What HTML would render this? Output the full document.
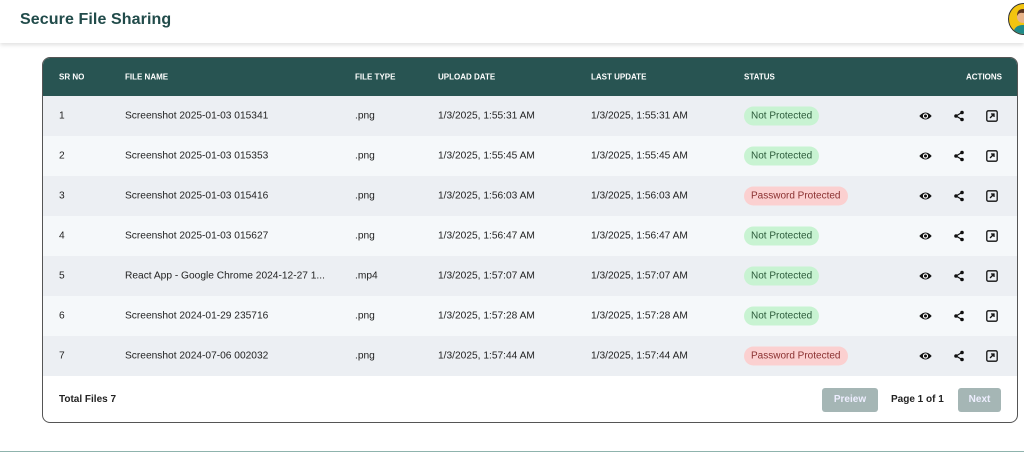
<!DOCTYPE html>
<html><head><style>
*{box-sizing:border-box;margin:0;padding:0}
body{width:1024px;height:456px;background:#fff;font-family:"Liberation Sans",Arial,sans-serif;position:relative;overflow:hidden;color:#222}
.hdr{height:43px;background:#fff;box-shadow:0 2px 4px rgba(0,0,0,.12);position:relative}
.hdr h1{position:absolute;left:20px;top:11px;font-size:16px;font-weight:bold;color:#214b4a;letter-spacing:.1px}
.av{position:absolute;left:1008px;top:3px;width:32px;height:32px;border-radius:50%;background:#f2c40f;border:1.5px solid #333;overflow:hidden}
.tbl{position:absolute;left:42px;top:57px;width:976px;height:366px;border:1px solid #555;border-radius:8px;overflow:hidden;background:#fff}
.th{height:38px;background:#285452;color:#fff;font-size:8px;font-weight:bold;position:relative}
.th span,.row span{position:absolute;top:50%;transform:translateY(-50%);white-space:nowrap}
.row{height:40px;position:relative;font-size:10.2px;color:#222}
.row:nth-child(odd){background:#eceff3}
.row:nth-child(even){background:#f5f8fa}
.b{padding:4px 7px;border-radius:10px;font-size:10px}
.g{background:#c8f3d2;color:#2b5a3a}
.r{background:#fbd0d0;color:#8a3030}
.ft{position:absolute;left:0;top:318px;width:100%;height:47px}
.btn{position:absolute;top:12px;height:24px;background:#a5b6b5;color:#eef;font-size:10px;font-weight:bold;border-radius:3px;text-align:center;line-height:24px}
</style></head><body>
<div class="hdr"><h1>Secure File Sharing</h1>
<div class="av"><svg width="32" height="32"><path d="M4 32 Q4 21 14 21 Q24 21 24 32Z" fill="#1f8a8a"/><circle cx="14" cy="13" r="6" fill="#e8b48a"/><path d="M8 12 Q8 5 14 5 Q20 5 20 12 Q18 8 14 9 Q10 8 8 12Z" fill="#5a3320"/></svg></div></div>
<div class="tbl">
<div class="th"><span style="left:16px">SR NO</span><span style="left:82px">FILE NAME</span><span style="left:312px">FILE TYPE</span><span style="left:395px">UPLOAD DATE</span><span style="left:548px">LAST UPDATE</span><span style="left:701px">STATUS</span><span style="right:15px">ACTIONS</span></div>
<div id="rows"></div>
<div class="ft"><span style="position:absolute;left:16px;top:18px;font-size:10px;font-weight:bold">Total Files 7</span>
<div class="btn" style="left:779px;width:56px">Preiew</div>
<span style="position:absolute;left:848px;top:18px;font-size:10px;font-weight:bold">Page 1 of 1</span>
<div class="btn" style="left:915px;width:43px">Next</div></div>
</div>
<div style="position:absolute;left:0;top:451px;width:1024px;height:1px;background:#8fb3ad"></div>
<script>
var d=[["1","Screenshot 2025-01-03 015341",".png","1:55:31",0],["2","Screenshot 2025-01-03 015353",".png","1:55:45",0],["3","Screenshot 2025-01-03 015416",".png","1:56:03",1],["4","Screenshot 2025-01-03 015627",".png","1:56:47",0],["5","React App - Google Chrome 2024-12-27 1...",".mp4","1:57:07",0],["6","Screenshot 2024-01-29 235716",".png","1:57:28",0],["7","Screenshot 2024-07-06 002032",".png","1:57:44",1]];
var ic='<svg style="position:absolute;left:876px;top:14px" width="13" height="12" viewBox="0 0 13 12"><path d="M0.3 6 Q6.5 -1 12.7 6 Q6.5 13 0.3 6Z" fill="#111"/><circle cx="6.5" cy="6" r="2.6" fill="#fff"/><circle cx="6.5" cy="6" r="1.5" fill="#111"/></svg>'+
'<svg style="position:absolute;left:910px;top:14px" width="12" height="12" viewBox="0 0 12 12"><circle cx="9" cy="2.5" r="1.8" fill="#111"/><circle cx="9" cy="9.5" r="1.8" fill="#111"/><circle cx="3" cy="6" r="1.8" fill="#111"/><path d="M9 2.5L3 6L9 9.5" stroke="#111" stroke-width="1.2" fill="none"/></svg>'+
'<svg style="position:absolute;left:943px;top:14px" width="12" height="12" viewBox="0 0 12 12"><rect x="0.8" y="0.8" width="10.4" height="10.4" rx="1.5" fill="none" stroke="#111" stroke-width="1.3"/><path d="M4 8L8 4M5 4H8V7" stroke="#111" stroke-width="1.3" fill="none"/></svg>';
var h='';d.forEach(function(r){h+='<div class="row"><span style="left:16px">'+r[0]+'</span><span style="left:82px">'+r[1]+'</span><span style="left:312px">'+r[2]+'</span><span style="left:395px">1/3/2025, '+r[3]+' AM</span><span style="left:548px">1/3/2025, '+r[3]+' AM</span><span class="b '+(r[4]?'r':'g')+'" style="left:701px">'+(r[4]?'Password Protected':'Not Protected')+'</span>'+ic+'</div>'});
document.getElementById('rows').innerHTML=h;
</script>
</body></html>
